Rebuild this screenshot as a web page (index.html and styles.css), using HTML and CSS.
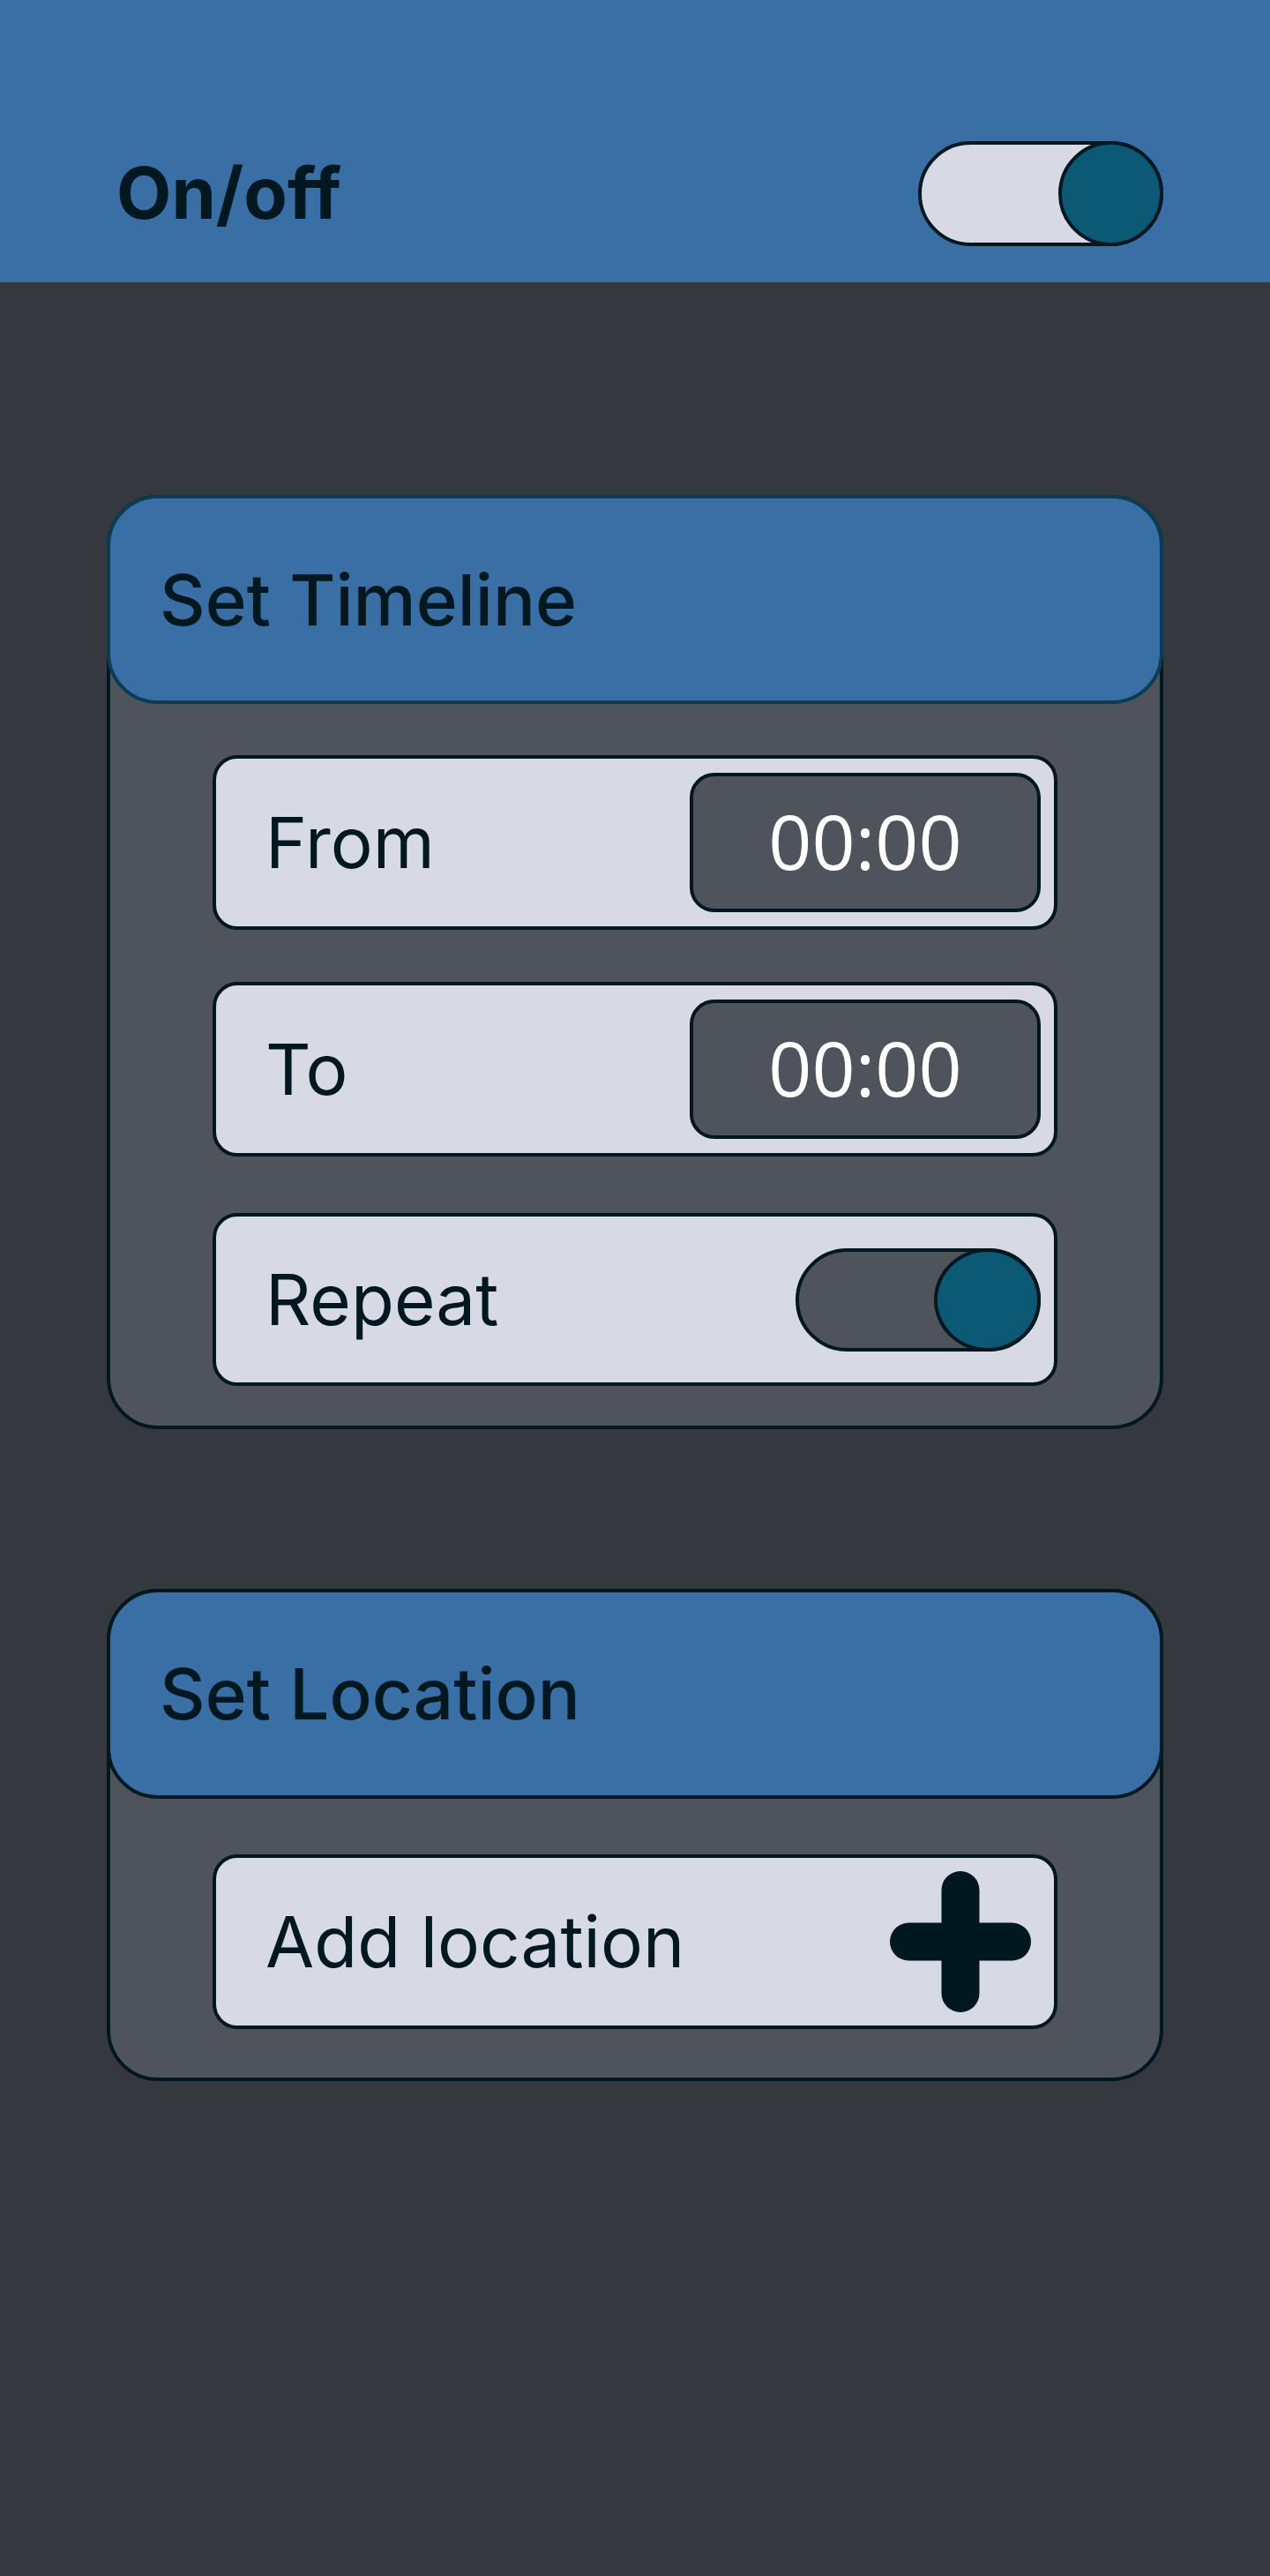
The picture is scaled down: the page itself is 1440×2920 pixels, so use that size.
FILE: index.html
```html
<!DOCTYPE html>
<html lang="en">
<head>
<meta charset="utf-8">
<title>Schedule</title>
<link rel="stylesheet" href="styles.css">
</head>
<body>
<header class="topbar">
  <h1 class="topbar-title">On/off</h1>
  <div class="switch switch-light" role="switch" aria-checked="true"><span class="knob"></span></div>
</header>
<main class="content">
  <section class="card card-timeline">
    <div class="card-head card-head-accent"><h2 class="card-title">Set Timeline</h2></div>
    <div class="card-body">
      <div class="row row-first">
        <span class="row-label">From</span>
        <span class="time-box">00:00</span>
      </div>
      <div class="row row-second">
        <span class="row-label">To</span>
        <span class="time-box">00:00</span>
      </div>
      <div class="row row-third">
        <span class="row-label">Repeat</span>
        <div class="switch switch-dark" role="switch" aria-checked="true"><span class="knob"></span></div>
      </div>
    </div>
  </section>
  <section class="card card-location">
    <div class="card-head"><h2 class="card-title">Set Location</h2></div>
    <div class="card-body card-body-location">
      <div class="row row-first">
        <span class="row-label">Add location</span>
        <svg class="plus-icon" width="160" height="160" viewBox="0 0 160 160" aria-hidden="true">
          <path d="M80 21.5V138.5M21.5 80H138.5" stroke="#021821" stroke-width="43" stroke-linecap="round" fill="none"/>
        </svg>
      </div>
    </div>
  </section>
</main>
</body>
</html>
```
FILE: styles.css
```css
* { box-sizing: border-box; }
html, body {
  margin: 0;
  padding: 0;
  background: #35383e;
}
body {
  font-family: Inter, "Noto Sans", sans-serif;
  color: #021821;
  min-height: 2920px;
}
.topbar {
  height: 320px;
  background: #3a6fa5;
  display: flex;
  align-items: flex-end;
  justify-content: space-between;
  padding: 0 121px 41px 132px;
}
.topbar-title {
  margin: 0;
  font-size: 81px;
  font-weight: 700;
  line-height: 119px;
}
.switch {
  position: relative;
  width: 278px;
  height: 119px;
  border: 4px solid #021821;
  border-radius: 60px;
  flex: none;
}
.switch-light { background: #d7d9e4; }
.switch-dark { background: #4f535c; width: 278px; height: 117px; }
.knob {
  position: absolute;
  top: -4px;
  right: -4px;
  width: 119px;
  height: 119px;
  border-radius: 50%;
  border: 4px solid #021821;
  background: #0c5976;
}
.switch-dark .knob { width: 121px; height: 117px; }
.content {
  padding: 241px 121px 0 121px;
}
.card {
  width: 1198px;
  border: 4px solid #021821;
  border-radius: 58px;
  background: #4f535c;
}
.card-location { margin-top: 181px; }
.card-head {
  margin: -4px -4px 0 -4px;
  height: 237px;
  border: 4px solid #021821;
  border-radius: 58px;
  background: #3a6fa5;
  display: flex;
  align-items: center;
  padding-left: 56px;
}
.card-head-accent { border-color: #0a3c53; }
.card-location .card-head { height: 238px; }
.card-title {
  margin: 0;
  font-size: 80px;
  font-weight: 500;
  line-height: 1;
}
.card-body {
  padding: 0 116px 45px 116px;
  display: flex;
  flex-direction: column;
}
.card-body-location { padding-bottom: 55px; }
.row {
  height: 198px;
  border: 4px solid #021821;
  border-radius: 28px;
  background: #d7d9e4;
  display: flex;
  align-items: center;
  justify-content: space-between;
  padding: 0 15px 0 56px;
}
.row-first { margin-top: 58px; }
.row-second { margin-top: 59px; }
.row-third { margin-top: 64px; height: 196px; }
.card-location .row-first { margin-top: 63px; padding-right: 26px; }
.row-label {
  font-size: 80px;
  font-weight: 400;
  line-height: 1;
}
.time-box {
  width: 398px;
  height: 158px;
  border: 4px solid #021821;
  border-radius: 28px;
  background: #4f535c;
  color: #ffffff;
  font-family: "Open Sans", "Noto Sans", sans-serif;
  font-size: 86px;
  display: flex;
  align-items: center;
  justify-content: center;
  line-height: 1;
  padding-bottom: 4px;
}
.plus-icon { display: block; flex: none; }
```
